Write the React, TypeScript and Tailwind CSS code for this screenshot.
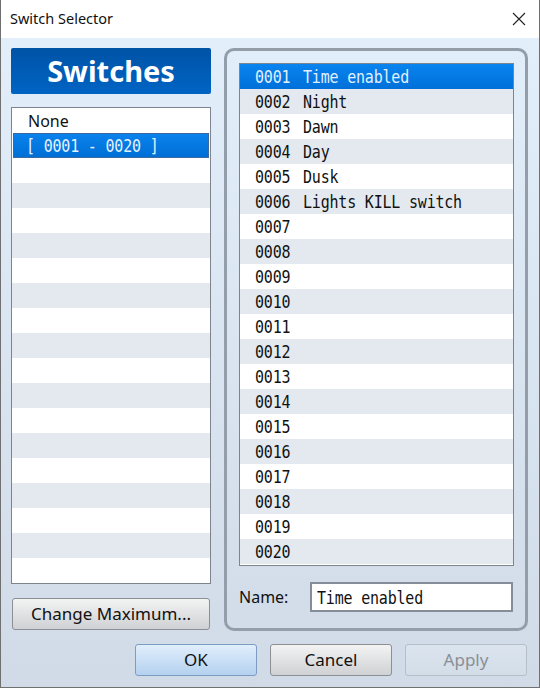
import React from 'react';

const sans = "font-['Noto_Sans','Open_Sans',sans-serif]";
const mono = "font-['DejaVu_Sans_Mono',monospace]";

const switches: string[] = [
  'Time enabled',
  'Night',
  'Dawn',
  'Day',
  'Dusk',
  'Lights KILL switch',
  '', '', '', '', '', '', '', '', '', '', '', '', '', '',
];

const pad = (n: number) => String(n).padStart(4, '0');

// tall narrow mono text, like the editor's list font
const Mono: React.FC<{ children: React.ReactNode; className?: string }> = ({ children, className = '' }) => (
  <span className={`inline-block whitespace-pre text-[15px] tracking-[-0.2px] scale-y-[1.15] translate-y-[1px] ${mono} ${className}`}>
    {children}
  </span>
);

const Button: React.FC<{ label: string; variant?: 'default' | 'primary' | 'disabled'; className?: string }> = ({
  label,
  variant = 'default',
  className = '',
}) => {
  const look =
    variant === 'primary'
      ? 'border-[#7c9cc4] bg-gradient-to-b from-[#e1eefc] to-[#b4d1ef] text-[#111]'
      : variant === 'disabled'
      ? 'border-[#b6bec7] bg-gradient-to-b from-[#dbe4ee] to-[#d3dde8] text-[#8a8f95]'
      : 'border-[#8c8f93] bg-gradient-to-b from-[#f3f3f3] to-[#cfd1d4] text-[#111]';
  return (
    <div
      className={`h-[32px] flex items-center justify-center rounded-[3px] border text-[17px] ${sans} ${look} ${className}`}
    >
      {label}
    </div>
  );
};

export default function App() {
  const leftRows = 19;

  return (
    <div className="w-[540px] h-[688px] flex flex-col border-x border-b border-[#707070] overflow-hidden">
      {/* Title bar */}
      <div className="h-[38px] shrink-0 bg-white flex items-center justify-between pl-[9px] pr-[13px]">
        <span className={`text-[14.5px] text-[#111] ${sans}`}>Switch Selector</span>
        <svg width="14" height="14" viewBox="0 0 14 14" className="text-[#222]">
          <path d="M1 1 L13 13 M13 1 L1 13" stroke="currentColor" strokeWidth="1.1" />
        </svg>
      </div>

      {/* Body */}
      <div className="flex-1 flex flex-col bg-gradient-to-b from-[#e3eefb] to-[#d0dbe7] pt-[10px] pl-[10px] pr-[11px] pb-[11px]">
        <div className="flex gap-[13px]">
          {/* Left column */}
          <div className="w-[200px] flex flex-col">
            <div className="h-[46px] rounded-[2px] bg-gradient-to-b from-[#0053a6] to-[#0064c4] flex items-center justify-center">
              <span className={`text-[29px] font-bold text-white ${sans}`}>Switches</span>
            </div>
            <div className="mt-[13px] h-[477px] border border-[#7d848c] bg-white flex flex-col overflow-hidden">
              {Array.from({ length: leftRows }).map((_, i) => {
                if (i === 1) {
                  return (
                    <div
                      key={i}
                      className="h-[25px] shrink-0 mx-[1px] border border-[#3b6aa0] bg-gradient-to-b from-[#0a82ec] to-[#006fd6] flex items-center pl-[12px]"
                    >
                      <Mono className="text-[#e6f2ff]">[ 0001 - 0020 ]</Mono>
                    </div>
                  );
                }
                return (
                  <div
                    key={i}
                    className={`h-[25px] shrink-0 flex items-center pl-[16px] ${i % 2 === 1 ? 'bg-[#e4e9f0]' : 'bg-white'}`}
                  >
                    {i === 0 && <span className={`text-[16px] text-[#111] ${sans}`}>None</span>}
                  </div>
                );
              })}
            </div>
            <Button label="Change Maximum..." className="mt-[14px] ml-[1px] w-[198px]" />
          </div>

          {/* Right group */}
          <div className="w-[304px] h-[583px] rounded-[10px] border-[3px] border-[#939ea9] pt-[12px] pl-[12px] pr-[11px] flex flex-col">
            <div className="h-[503px] border border-[#7d848c] bg-white flex flex-col overflow-hidden">
              {switches.map((name, i) => {
                const selected = i === 0;
                return (
                  <div
                    key={i}
                    className={`h-[25px] shrink-0 flex items-center pl-[15px] ${
                      selected
                        ? 'bg-gradient-to-b from-[#0a84ef] to-[#0070d9] text-[#e2f0ff]'
                        : i % 2 === 1
                        ? 'bg-[#e4e9f0] text-[#111]'
                        : 'bg-white text-[#111]'
                    }`}
                  >
                    <Mono className="w-[48px]">{pad(i + 1)}</Mono>
                    <Mono>{name}</Mono>
                  </div>
                );
              })}
            </div>
            <div className="mt-[16px] flex items-center">
              <span className={`w-[71px] text-[16px] text-[#111] ${sans}`}>Name:</span>
              <div className="w-[203px] h-[30px] border-2 border-[#858e98] bg-white flex items-center pl-[5px]">
                <Mono className="text-[#111]">Time enabled</Mono>
              </div>
            </div>
          </div>
        </div>

        {/* Dialog buttons */}
        <div className="mt-[13px] flex justify-end gap-[13px] pr-[1px]">
          <Button label="OK" variant="primary" className="w-[122px]" />
          <Button label="Cancel" className="w-[122px]" />
          <Button label="Apply" variant="disabled" className="w-[122px]" />
        </div>
      </div>
    </div>
  );
}
